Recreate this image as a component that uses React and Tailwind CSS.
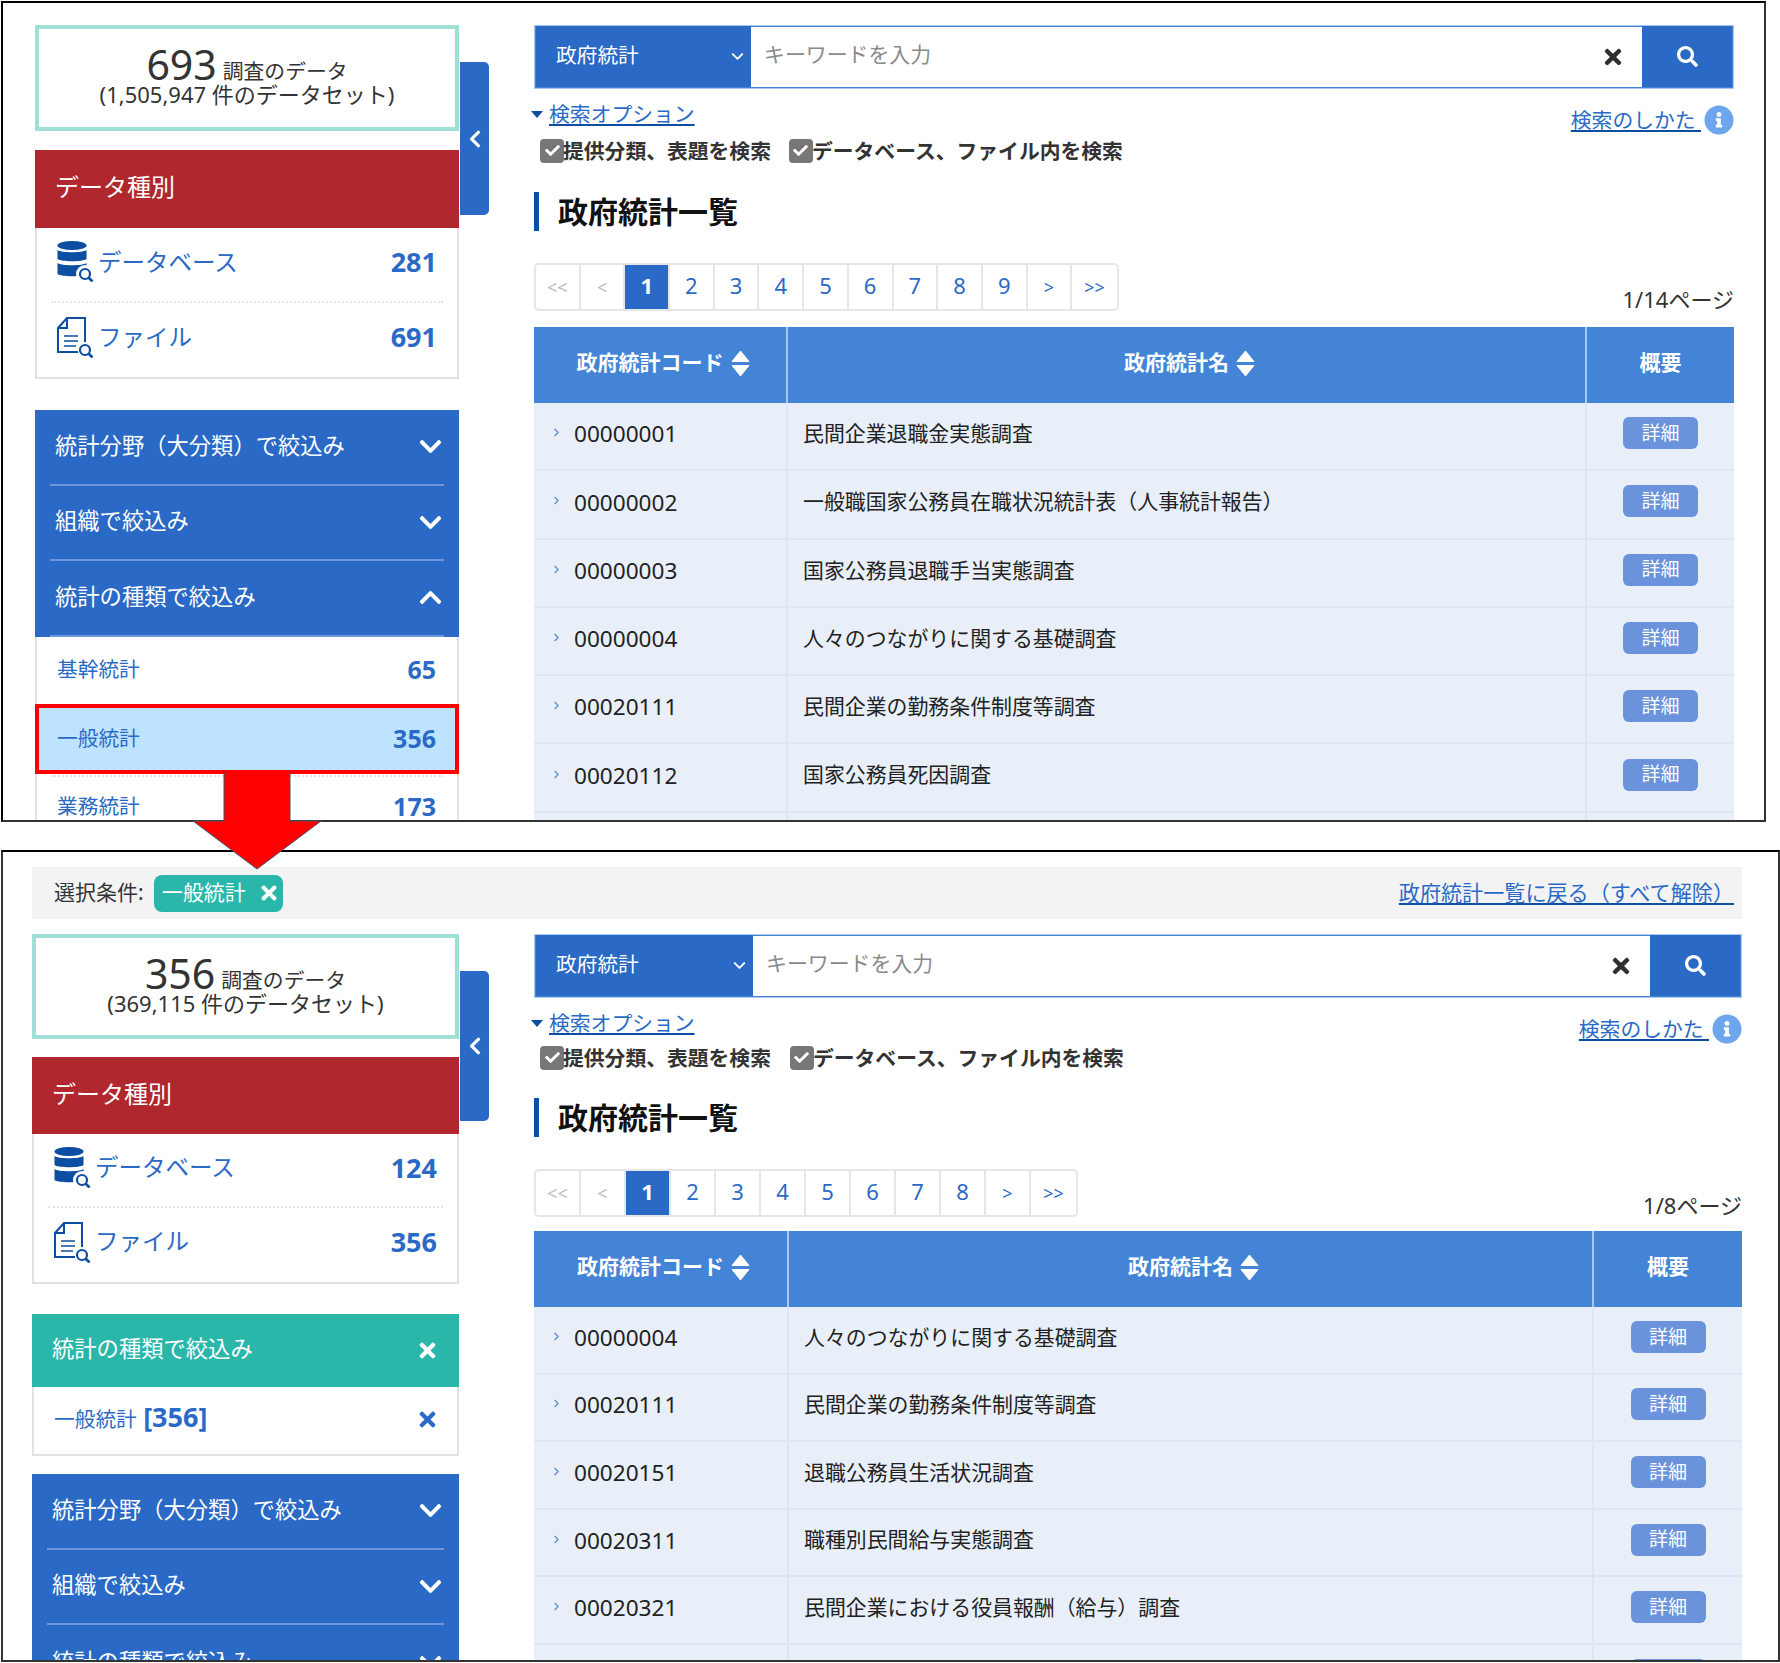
import React from "react";
import { FaTimes, FaChevronDown, FaChevronUp, FaChevronLeft, FaSearch, FaInfoCircle, FaCheck } from "react-icons/fa";
import { ChevronDown, ChevronRight } from "lucide-react";

const DbIcon = () => (
  <svg width="37" height="41" viewBox="0 0 37 41" className="shrink-0">
    <ellipse cx="15" cy="4.5" rx="14.5" ry="4.5" fill="#0b4ea2" />
    <path d="M0.5 9c3 3 26 3 29 0v9c-3 3-26 3-29 0z" fill="#0b4ea2" />
    <path d="M0.5 22c3 3 26 3 29 0v11c-3 3-26 3-29 0z" fill="#0b4ea2" />
    <circle cx="28" cy="33" r="9" fill="#fff" />
    <circle cx="28" cy="33" r="5" fill="none" stroke="#0b4ea2" strokeWidth="2.2" />
    <path d="M31.5 36.5l4 4" stroke="#0b4ea2" strokeWidth="2.6" />
  </svg>
);

const FileIcon = () => (
  <svg width="37" height="41" viewBox="0 0 37 41" className="shrink-0">
    <path d="M21 35H1V11L10 1h18v24" fill="none" stroke="#0b4ea2" strokeWidth="2" />
    <path d="M10 1v10H1" fill="none" stroke="#0b4ea2" strokeWidth="2" />
    <path d="M7 19h14M7 24h14M7 29h12" stroke="#0b4ea2" strokeWidth="1.6" />
    <circle cx="28" cy="33" r="5" fill="#fff" stroke="#0b4ea2" strokeWidth="2.2" />
    <path d="M31.5 36.5l4 4" stroke="#0b4ea2" strokeWidth="2.6" />
  </svg>
);

const SortIcon = () => (
  <svg width="19" height="27" viewBox="0 0 19 27" className="shrink-0" fill="#fff">
    <path d="M9.5 1L18 11.5H1z" stroke="#fff" strokeWidth="1" strokeLinejoin="round" />
    <path d="M9.5 26L18 15.5H1z" stroke="#fff" strokeWidth="1" strokeLinejoin="round" />
  </svg>
);

const Summary = ({ count, sets, className }) => (
  <div className={`border-4 border-[#9fe0d6] bg-white flex flex-col items-center text-[#333] pt-[16px] ${className}`}>
    <div className="flex items-baseline leading-[38px]">
      <span className="text-[41px]">{count}</span>
      <span className="text-[20.8px] ml-[6px] -translate-y-[1px]">調査のデータ</span>
    </div>
    <div className="text-[22px] leading-[24px] -mt-[9px]">({sets} 件のデータセット)</div>
  </div>
);

const DataTypes = ({ db, file, headH, rowH, cardH }) => (
  <div>
    <div className={`bg-[#b0282e] text-white text-[24px] flex items-center pl-[20px] pb-[4px] ${headH}`}>データ種別</div>
    <div className={`border-x-2 border-b-2 border-[#e2e2e2] px-[14px] ${cardH}`}>
      <div className={`flex items-center border-b-2 border-dotted border-[#e4e4e4] ${rowH}`}>
        <div className="ml-[6px] -mt-[6px]"><DbIcon /></div>
        <span className="text-[23.5px] text-[#2a6ac6] ml-[4px] -mt-[4px]">データベース</span>
        <span className="ml-auto mr-[6px] text-[27px] font-bold text-[#2a6ac6] -mt-[4px]">{db}</span>
      </div>
      <div className={`flex items-center ${rowH}`}>
        <div className="ml-[6px] -mt-[6px]"><FileIcon /></div>
        <span className="text-[23.5px] text-[#2a6ac6] ml-[4px] -mt-[6px]">ファイル</span>
        <span className="ml-auto mr-[6px] text-[27px] font-bold text-[#2a6ac6] -mt-[6px]">{file}</span>
      </div>
    </div>
  </div>
);

const FilterRow = ({ label, open, last }) => (
  <div className={`mx-[15px] flex items-center h-[75.5px] pl-[5px] pr-[1px] text-white text-[22.3px] ${last ? "" : "border-b-2 border-[#6f97dc]"}`}>
    <span className="-mt-[3px]">{label}</span>
    {open ? <FaChevronUp size={25} className="ml-auto" /> : <FaChevronDown size={25} className="ml-auto" />}
  </div>
);

const ListRow = ({ label, n, selected }) => (
  <div
    className={`flex items-center justify-between text-[#2a6ac6] ${
      selected
        ? "h-[70px] border-4 border-[#ff0000] bg-[#bde3ff] pl-[18px] pr-[19px]"
        : "h-[67px] border-x-2 border-[#e2e2e2] pl-[20px] pr-[21px]"
    }`}
  >
    <span className="text-[20.7px]">{label}</span>
    <span className="text-[25px] font-bold">{n}</span>
  </div>
);

const SearchBar = ({ selectW }) => (
  <div className="flex h-[64px] border-2 border-[#4384d6] outline-1 outline-[#a8c6ee] -outline-offset-1">
    <div className={`bg-[#2a6ac6] text-white text-[20.7px] flex items-center pl-[20px] pr-[4px] justify-between -mt-[1px] pb-[1px] ${selectW}`}>
      <span>政府統計</span>
      <ChevronDown size={19} strokeWidth={2.4} />
    </div>
    <input
      readOnly
      placeholder="キーワードを入力"
      className="flex-1 min-w-0 pl-[13px] pb-[5px] text-[20.9px] placeholder:text-[#8a8a8a] outline-none"
    />
    <div className="flex items-center pr-[17px] text-[#2f2f2f]"><FaTimes size={24} /></div>
    <div className="w-[90px] bg-[#2a6ac6] text-white flex items-center justify-center -mt-[1px]"><FaSearch size={21} /></div>
  </div>
);

const Check = () => (
  <span className="w-[24px] h-[24px] bg-[#777] rounded-[4px] flex items-center justify-center text-white shrink-0 -mt-[3px]">
    <FaCheck size={15} />
  </span>
);

const Options = ({ optH, gap }) => (
  <>
    <div className={`flex justify-between items-start ${optH}`}>
      <div className="flex items-center -ml-[3px] mt-[12px]">
        <span className="w-0 h-0 border-x-[6px] border-x-transparent border-t-[7px] border-t-[#0b4ea2]" />
        <a className="text-[20.8px] leading-[26px] text-[#2a6ac6] underline decoration-[#0b4ea2] pl-[6px]">検索オプション</a>
      </div>
      <div className="flex items-center mt-[16px]">
        <a className="text-[20.8px] leading-[28px] text-[#2a6ac6] underline decoration-[#0b4ea2] mr-[3px] whitespace-pre">検索のしかた </a>
        <FaInfoCircle size={30} className="text-[#6ea6ee]" />
      </div>
    </div>
    <div className="flex items-center h-[28px] ml-[6px] text-[20.8px] font-bold text-[#333]">
      <Check />
      <span className="-ml-[1px]">提供分類、表題を検索</span>
      <span className={gap} />
      <Check />
      <span className="-ml-[1px]">データベース、ファイル内を検索</span>
    </div>
  </>
);

const Pagination = ({ pages, cellW }) => {
  const nums = Array.from({ length: pages }, (_, i) => i + 1);
  const cell = `${cellW} flex items-center justify-center border-r-2 border-[#e6e6e6] last:border-r-0`;
  return (
    <div className="flex h-[48px] border-2 border-[#e6e6e6] rounded-[5px] text-[#2a6ac6]">
      <span className={`${cell} text-[#bbb] text-[18px]`}>&lt;&lt;</span>
      <span className={`${cell} text-[#bbb] text-[18px]`}>&lt;</span>
      {nums.map((n) => (
        <span key={n} className={`${cell} text-[22px] pb-[4px] ${n === 1 ? "bg-[#2a6ac6] text-white font-bold" : ""}`}>{n}</span>
      ))}
      <span className={`${cell} text-[18px]`}>&gt;</span>
      <span className={`${cell} text-[18px]`}>&gt;&gt;</span>
    </div>
  );
};

const TableHead = ({ cols }) => (
  <div className={`grid ${cols} h-[76px] bg-[#4384d6] text-white text-[21px] font-bold`}>
    <div className="flex items-center justify-center gap-[7px] pb-[3px] pl-[6px]"><span className="-mt-[2px]">政府統計コード</span><SortIcon /></div>
    <div className="flex items-center justify-center gap-[7px] border-l-2 border-[#a8c6ee] pb-[3px] pl-[6px]"><span className="-mt-[2px]">政府統計名</span><SortIcon /></div>
    <div className="flex items-center justify-center border-l-2 border-[#a8c6ee] pb-[3px]"><span className="-mt-[2px]">概要</span></div>
  </div>
);

const Row = ({ code, name, cols, rowH }) => (
  <div className={`grid ${cols} ${rowH} bg-[#e8eff8] border-b-2 border-[#dce7f6] text-[#222]`}>
    <div className="flex items-center pl-[16px] pb-[4px]">
      {code && <ChevronRight size={13} className="text-[#5a84c8] mr-[11px] -mt-[3px]" />}
      <span className="text-[22.6px]">{code}</span>
    </div>
    <div className="flex items-center pl-[15px] border-l-2 border-[#dce7f6] pb-[5px] text-[20.9px]">{name}</div>
    <div className="flex items-center justify-center border-l-2 border-[#dce7f6] pb-[6px]">
      <span className="w-[75px] h-[32px] rounded-[6px] bg-[#6a93dc] text-white text-[19px] flex items-center justify-center">詳細</span>
    </div>
  </div>
);

const Tab = ({ className }) => (
  <div className={`w-[29px] ml-[1px] bg-[#2a6ac6] rounded-r-[5px] text-white flex items-center justify-center ${className}`}>
    <FaChevronLeft size={20} />
  </div>
);

const Main = ({ selectW, pages, cellW, pageText, cols, rowH, rows, optH, gap, titleMt, pagMt, headMt }) => (
  <div className="flex-1 min-w-0">
    <SearchBar selectW={selectW} />
    <Options optH={optH} gap={gap} />
    <div className={`${titleMt} h-[39px] border-l-[5px] border-[#0b4ea2] pl-[19px] flex items-center text-[30px] font-bold text-[#111]`}>政府統計一覧</div>
    <div className={`flex justify-between items-end ${pagMt}`}>
      <Pagination pages={pages} cellW={cellW} />
      <span className="text-[22px] text-[#333] leading-[26px] -mb-[1px]">{pageText}</span>
    </div>
    <div className={headMt}>
      <TableHead cols={cols} />
      {rows.map((r, i) => (
        <Row key={i} code={r[0]} name={r[1]} cols={cols} rowH={rowH} />
      ))}
    </div>
  </div>
);

const topRows = [
  ["00000001", "民間企業退職金実態調査"],
  ["00000002", "一般職国家公務員在職状況統計表（人事統計報告）"],
  ["00000003", "国家公務員退職手当実態調査"],
  ["00000004", "人々のつながりに関する基礎調査"],
  ["00020111", "民間企業の勤務条件制度等調査"],
  ["00020112", "国家公務員死因調査"],
  ["", ""],
];

const bottomRows = [
  ["00000004", "人々のつながりに関する基礎調査"],
  ["00020111", "民間企業の勤務条件制度等調査"],
  ["00020151", "退職公務員生活状況調査"],
  ["00020311", "職種別民間給与実態調査"],
  ["00020321", "民間企業における役員報酬（給与）調査"],
  ["", ""],
];

export default function App() {
  return (
    <div className="relative w-[1780px] h-[1663px] bg-white font-['Noto_Sans','Noto_Sans_CJK_JP',sans-serif] overflow-hidden">
      {/* top window */}
      <div className="ml-[1px] mt-[1px] w-[1765px] h-[821px] border-2 border-[#333] border-l-black border-t-black overflow-hidden pt-[22px] pl-[32px] pr-[30px] flex">
        <div className="w-[424px] shrink-0">
          <Summary count="693" sets="1,505,947" className="h-[106px]" />
          <div className="mt-[19px]">
            <DataTypes db="281" file="691" headH="h-[78px]" rowH="h-[75px]" cardH="h-[151px]" />
          </div>
          <div className="mt-[31px] bg-[#2a6ac6]">
            <FilterRow label="統計分野（大分類）で絞込み" />
            <FilterRow label="組織で絞込み" />
            <FilterRow label="統計の種類で絞込み" open />
          </div>
          <ListRow label="基幹統計" n="65" />
          <ListRow label="一般統計" n="356" selected />
          <div className="border-x-2 border-[#e2e2e2] px-[14px] h-0">
            <div className="border-b-2 border-dotted border-[#e4e4e4] pt-[1px]" />
          </div>
          <ListRow label="業務統計" n="173" />
        </div>
        <Tab className="h-[153px] mt-[37px]" />
        <div className="w-[45px] shrink-0" />
        <Main
          selectW="w-[215px]"
          pages={9}
          cellW="w-[44.7px]"
          pageText="1/14ページ"
          cols="grid-cols-[252px_1fr_149px]"
          rowH="h-[68.3px]"
          rows={topRows}
          optH="h-[49px]"
          gap="w-[18px]"
          titleMt="mt-[26px]"
          pagMt="mt-[32px]"
          headMt="mt-[16px]"
        />
      </div>

      {/* bottom window */}
      <div className="ml-[1px] mt-[28px] w-[1779px] h-[812px] border-2 border-[#333] border-t-black overflow-hidden pt-[15px] pl-[29px] pr-[36px]">
        <div className="flex items-center h-[52px] bg-[#f3f3f3] pl-[22px] pr-[8px] text-[21px] text-[#333]">
          <span>選択条件:</span>
          <span className="ml-[10px] w-[129px] h-[37px] rounded-[8px] bg-[#2ab7a9] text-white flex items-center pl-[8px] gap-[12px]">
            一般統計
            <FaTimes size={22} />
          </span>
          <a className="ml-auto text-[21.1px] text-[#2a6ac6] underline decoration-[#0b4ea2]">政府統計一覧に戻る（すべて解除）</a>
        </div>
        <div className="flex mt-[15px]">
          <div className="w-[427px] shrink-0">
            <Summary count="356" sets="369,115" className="h-[105px]" />
            <div className="mt-[18px]">
              <DataTypes db="124" file="356" headH="h-[77px]" rowH="h-[74px]" cardH="h-[150px]" />
            </div>
            <div className="mt-[30px] h-[73px] bg-[#2ab7a9] text-white text-[22.3px] flex items-center pl-[20px] pr-[20px] justify-between">
              <span className="-mt-[4px]">統計の種類で絞込み</span>
              <FaTimes size={23} />
            </div>
            <div className="h-[69px] border-x-2 border-b-2 border-[#e2e2e2] flex items-center pl-[20px] pr-[18px] text-[#2a6ac6]">
              <span className="text-[20.7px] -mt-[6px]">一般統計 <b className="text-[27px] ml-[1px]">[356]</b></span>
              <FaTimes size={23} className="ml-auto -mt-[2px]" />
            </div>
            <div className="mt-[18px] bg-[#2a6ac6]">
              <FilterRow label="統計分野（大分類）で絞込み" />
              <FilterRow label="組織で絞込み" />
              <FilterRow label="統計の種類で絞込み" last />
            </div>
          </div>
          <Tab className="h-[150px] mt-[37px]" />
          <div className="w-[45px] shrink-0" />
          <Main
            selectW="w-[217px]"
            pages={8}
            cellW="w-[45px]"
            pageText="1/8ページ"
            cols="grid-cols-[253px_1fr_150px]"
            rowH="h-[67.6px]"
            rows={bottomRows}
            optH="h-[47px]"
            gap="w-[19px]"
            titleMt="mt-[25px]"
            pagMt="mt-[32px]"
            headMt="mt-[14px]"
          />
        </div>
      </div>

      {/* arrow linking the two screens */}
      <svg width="1780" height="1663" className="absolute left-0 top-0 pointer-events-none">
        <polygon points="224,773 290,773 290,821 321,821 257,869 193,821 224,821" fill="#ff0000" stroke="#44546a" strokeWidth="1" />
        <rect x="225" y="770" width="64" height="6" fill="#ff0000" />
      </svg>
    </div>
  );
}
